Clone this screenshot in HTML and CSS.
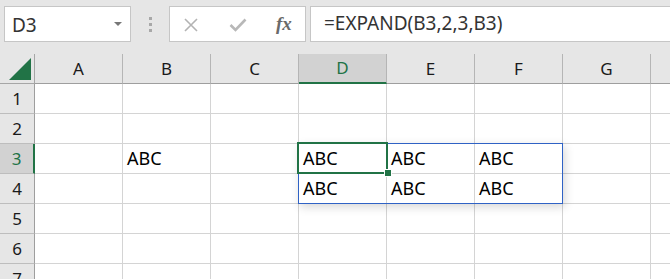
FILE: index.html
```html
<!DOCTYPE html>
<html lang="ja">
<head>
<meta charset="utf-8">
<title>EXPAND</title>
<link rel="stylesheet" href="styles.css">
</head>
<body>
<div class="app">
  <div class="toolbar">
    <div class="namebox">
      <span class="name">D3</span>
      <span class="caret"></span>
    </div>
    <div class="grip"><i></i><i></i><i></i></div>
    <div class="fnbox">
      <svg class="ico ico-x" width="16" height="14" viewBox="0 0 16 14"><path d="M2 1 L14 13 M14 1 L2 13" stroke="#b3b3b3" stroke-width="1.6" fill="none"/></svg>
      <svg class="ico ico-ok" width="18" height="14" viewBox="0 0 18 14"><path d="M1.5 7 L6.5 12 L16.5 1.5" stroke="#b8b8b8" stroke-width="2.6" fill="none"/></svg>
      <span class="fx">fx</span>
    </div>
    <div class="formula">=EXPAND(B3,2,3,B3)</div>
  </div>
  <div class="sheet">
    <div class="corner"><span class="tri"></span></div>
    <div class="ch">A</div>
    <div class="ch">B</div>
    <div class="ch">C</div>
    <div class="ch ch-sel">D</div>
    <div class="ch">E</div>
    <div class="ch">F</div>
    <div class="ch">G</div>
    <div class="ch"></div>

    <div class="rh">1</div>
    <div class="c"></div><div class="c"></div><div class="c"></div><div class="c"></div><div class="c"></div><div class="c"></div><div class="c"></div><div class="c"></div>

    <div class="rh">2</div>
    <div class="c"></div><div class="c"></div><div class="c"></div><div class="c"></div><div class="c"></div><div class="c"></div><div class="c"></div><div class="c"></div>

    <div class="rh rh-sel">3</div>
    <div class="c"></div><div class="c">ABC</div><div class="c"></div>
    <div class="c c-anchor">ABC<span class="spill"></span><span class="active"><span class="handle"></span></span></div>
    <div class="c">ABC</div><div class="c">ABC</div><div class="c"></div><div class="c"></div>

    <div class="rh">4</div>
    <div class="c"></div><div class="c"></div><div class="c"></div><div class="c">ABC</div><div class="c">ABC</div><div class="c">ABC</div><div class="c"></div><div class="c"></div>

    <div class="rh">5</div>
    <div class="c"></div><div class="c"></div><div class="c"></div><div class="c"></div><div class="c"></div><div class="c"></div><div class="c"></div><div class="c"></div>

    <div class="rh">6</div>
    <div class="c"></div><div class="c"></div><div class="c"></div><div class="c"></div><div class="c"></div><div class="c"></div><div class="c"></div><div class="c"></div>

    <div class="rh">7</div>
    <div class="c"></div><div class="c"></div><div class="c"></div><div class="c"></div><div class="c"></div><div class="c"></div><div class="c"></div><div class="c"></div>
  </div>
</div>
</body>
</html>
```

FILE: styles.css
```css
* { box-sizing: border-box; }
html, body {
  margin: 0;
  padding: 0;
  background: #e6e6e6;
  overflow: hidden;
}
body {
  width: 670px;
  height: 279px;
  font-family: "Noto Sans", "Noto Sans CJK JP", sans-serif;
}
.app {
  width: 670px;
  height: 279px;
  overflow: hidden;
}
.toolbar {
  height: 54px;
  padding: 6px 0 0 4px;
  display: flex;
  align-items: flex-start;
}
.namebox {
  width: 127px;
  height: 36px;
  background: #fff;
  border: 1px solid #c6c6c6;
  display: flex;
  align-items: center;
  padding: 0 8px 0 7px;
}
.name {
  flex: 1;
  font-size: 19px;
  color: #333;
  line-height: 1;
  padding-top: 2px;
}
.caret {
  width: 0;
  height: 0;
  border-left: 4px solid transparent;
  border-right: 4px solid transparent;
  border-top: 4px solid #777;
}
.grip {
  width: 38px;
  height: 36px;
  display: flex;
  flex-direction: column;
  align-items: center;
  justify-content: center;
  gap: 3px;
}
.grip i {
  display: block;
  width: 3px;
  height: 3px;
  background: #a8a8a8;
}
.fnbox {
  width: 137px;
  height: 36px;
  background: #fff;
  border: 1px solid #c6c6c6;
  display: flex;
  align-items: center;
  padding-left: 13px;
}
.ico-x { margin-top: 1px; }
.ico-ok { margin-left: 30px; margin-top: 2px; }
.fx {
  margin-left: 29px;
  font-family: "Liberation Serif", "DejaVu Serif", serif;
  font-style: italic;
  font-weight: bold;
  font-size: 19px;
  color: #6a6a6a;
}
.formula {
  flex: 1;
  margin-left: 4px;
  height: 36px;
  background: #fff;
  border: 1px solid #c6c6c6;
  border-right: none;
  padding-left: 13px;
  font-size: 19px;
  line-height: 33px;
  color: #333;
  white-space: nowrap;
}

.sheet {
  display: grid;
  grid-template-columns: 35px repeat(8, 88px);
  grid-template-rows: repeat(8, 30px);
  background: #fff;
}
.corner {
  background: #e6e6e6;
  border-right: 1px solid #a6a6a6;
  border-bottom: 1px solid #a6a6a6;
  display: flex;
  align-items: flex-end;
  justify-content: flex-end;
  padding: 0 3px 3px 0;
}
.tri {
  width: 22px;
  height: 22px;
  background: #217346;
  clip-path: polygon(100% 0, 100% 100%, 0 100%);
}
.ch {
  background: #e6e6e6;
  border-right: 1px solid #b5b5b5;
  border-bottom: 1px solid #9e9e9e;
  text-align: center;
  font-size: 17px;
  line-height: 29px;
  color: #1a1a1a;
}
.ch-sel {
  background: #d2d2d2;
  color: #217346;
  border-bottom: 2px solid #217346;
  line-height: 28px;
}
.rh {
  background: #e6e6e6;
  border-right: 1px solid #9e9e9e;
  border-bottom: 1px solid #bdbdbd;
  text-align: center;
  font-size: 17px;
  line-height: 29px;
  color: #1a1a1a;
}
.rh-sel {
  background: #d2d2d2;
  color: #217346;
  border-right: 2px solid #217346;
}
.c {
  border-right: 1px solid #d4d4d4;
  border-bottom: 1px solid #d4d4d4;
  font-size: 18px;
  line-height: 29px;
  padding-left: 4px;
  color: #000;
  white-space: nowrap;
}
.c-anchor {
  position: relative;
}
.spill {
  position: absolute;
  left: -1px;
  top: -1px;
  width: 265px;
  height: 61px;
  border: 1px solid #2f62c5;
  box-shadow: 2px 3px 9px rgba(0, 0, 0, 0.16);
  z-index: 1;
}
.active {
  position: absolute;
  left: -2px;
  top: -2px;
  width: 91px;
  height: 32px;
  border: 2px solid #217346;
  z-index: 2;
}
.handle {
  position: absolute;
  right: -5px;
  bottom: -4px;
  width: 6px;
  height: 6px;
  background: #217346;
  outline: 1px solid #fff;
}
```
